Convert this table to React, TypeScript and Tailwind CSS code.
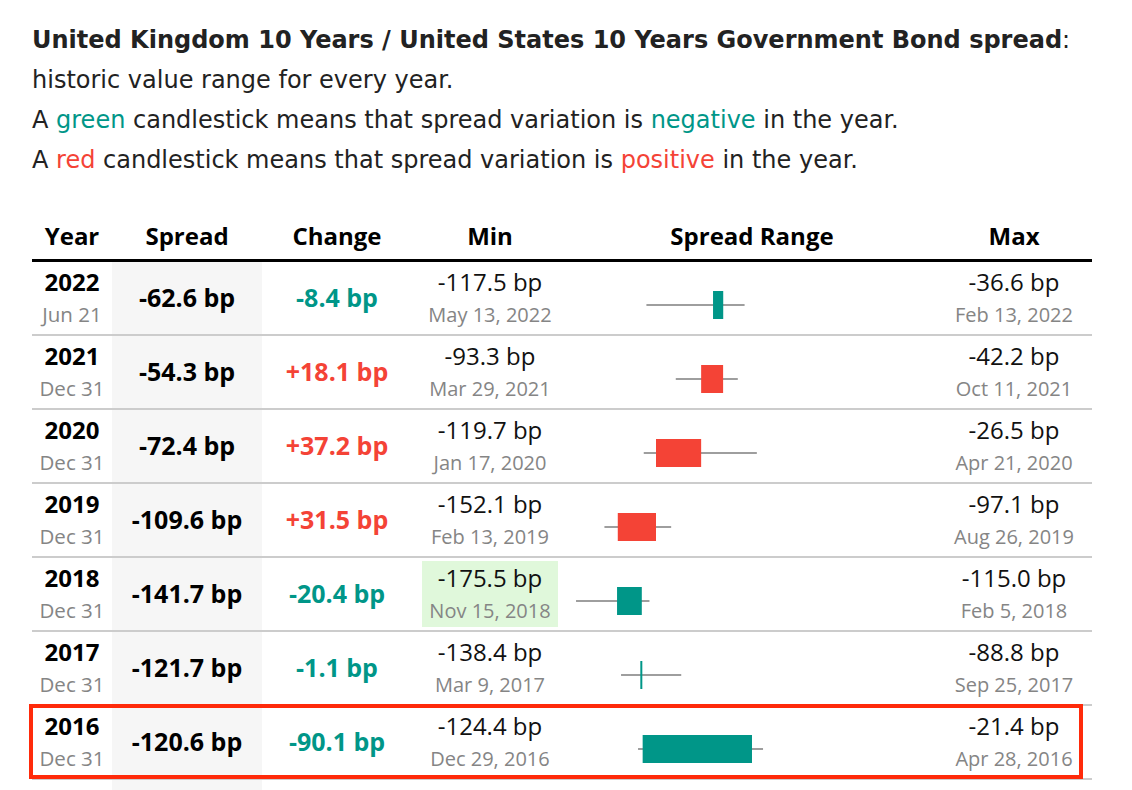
import React from "react";

type Row = {
  year: string;
  date: string;
  spread: number;
  change: number;
  min: number;
  minDate: string;
  max: number;
  maxDate: string;
  hlMin?: boolean;
};

const rows: Row[] = [
  { year: "2022", date: "Jun 21", spread: -62.6, change: -8.4, min: -117.5, minDate: "May 13, 2022", max: -36.6, maxDate: "Feb 13, 2022" },
  { year: "2021", date: "Dec 31", spread: -54.3, change: 18.1, min: -93.3, minDate: "Mar 29, 2021", max: -42.2, maxDate: "Oct 11, 2021" },
  { year: "2020", date: "Dec 31", spread: -72.4, change: 37.2, min: -119.7, minDate: "Jan 17, 2020", max: -26.5, maxDate: "Apr 21, 2020" },
  { year: "2019", date: "Dec 31", spread: -109.6, change: 31.5, min: -152.1, minDate: "Feb 13, 2019", max: -97.1, maxDate: "Aug 26, 2019" },
  { year: "2018", date: "Dec 31", spread: -141.7, change: -20.4, min: -175.5, minDate: "Nov 15, 2018", max: -115.0, maxDate: "Feb 5, 2018", hlMin: true },
  { year: "2017", date: "Dec 31", spread: -121.7, change: -1.1, min: -138.4, minDate: "Mar 9, 2017", max: -88.8, maxDate: "Sep 25, 2017" },
  { year: "2016", date: "Dec 31", spread: -120.6, change: -90.1, min: -124.4, minDate: "Dec 29, 2016", max: -21.4, maxDate: "Apr 28, 2016" },
];

const fmt = (v: number, sign = false) => {
  const s = Math.abs(v).toFixed(1);
  if (v < 0) return `-${s} bp`;
  return `${sign ? "+" : ""}${s} bp`;
};

const GREEN = "#009688";
const RED = "#f44336";

function Candle({ r }: { r: Row }) {
  const x = (v: number) => 221 + 1.2135 * v;
  const open = r.spread - r.change;
  const close = r.spread;
  const bx1 = x(Math.min(open, close));
  const bx2 = x(Math.max(open, close));
  const w = Math.max(2, bx2 - bx1);
  const color = r.change < 0 ? GREEN : RED;
  return (
    <svg width="368" height="72" className="block">
      <line x1={x(r.min)} x2={x(r.max)} y1="43" y2="43" stroke="#9e9e9e" strokeWidth="2" />
      <rect x={w === 2 ? bx1 - 1 : bx1} y="29" width={w} height="28" fill={color} />
    </svg>
  );
}

export default function App() {
  return (
    <div className="h-[790px] bg-white overflow-hidden">
      <div
        className="pl-[32px] pt-[20px] text-[24px] leading-[40px] text-[#222]"
        style={{ fontFamily: '"DejaVu Sans", Verdana, sans-serif' }}
      >
        <div>
          <span className="font-bold">United Kingdom 10 Years / United States 10 Years Government Bond spread</span>:
        </div>
        <div>historic value range for every year.</div>
        <div>
          A <span className="text-[#009688]">green</span> candlestick means that spread variation is{" "}
          <span className="text-[#009688]">negative</span> in the year.
        </div>
        <div>
          A <span className="text-[#f44336]">red</span> candlestick means that spread variation is{" "}
          <span className="text-[#f44336]">positive</span> in the year.
        </div>
      </div>

      <div className="relative ml-[32px] mt-[34px] w-[1060px]" style={{ fontFamily: '"Open Sans", sans-serif' }}>
        <table className="w-[1060px] table-fixed border-collapse text-black">
          <colgroup>
            <col className="w-[80px]" />
            <col className="w-[150px]" />
            <col className="w-[150px]" />
            <col className="w-[156px]" />
            <col className="w-[368px]" />
            <col className="w-[156px]" />
          </colgroup>
          <thead>
            <tr className="h-[46px] border-b-[3px] border-black text-[24px] font-bold">
              <th className="p-0 text-center">Year</th>
              <th className="p-0 text-center">Spread</th>
              <th className="p-0 text-center">Change</th>
              <th className="p-0 text-center">Min</th>
              <th className="p-0 text-center">Spread Range</th>
              <th className="p-0 text-center">Max</th>
            </tr>
          </thead>
          <tbody>
            {rows.map((r) => (
              <tr key={r.year} className="h-[74px] border-b-2 border-[#cccccc]">
                <td className="p-0 text-center align-middle">
                  <div className="text-[24px] font-bold leading-[33px]">{r.year}</div>
                  <div className="text-[20.5px] leading-[33px] text-[#858585]">{r.date}</div>
                </td>
                <td className="bg-[#f6f6f6] p-0 text-center align-middle text-[25px] font-bold">{fmt(r.spread)}</td>
                <td
                  className={`p-0 text-center align-middle text-[25px] font-bold ${
                    r.change < 0 ? "text-[#009688]" : "text-[#f44336]"
                  }`}
                >
                  {fmt(r.change, true)}
                </td>
                <td className="p-0 text-center align-middle">
                  <div className={`mx-auto inline-block px-[7px] ${r.hlMin ? "bg-[#e0f8db]" : ""}`}>
                    <div className="text-[24px] leading-[33px] text-[#111]">{fmt(r.min)}</div>
                    <div className="text-[20px] leading-[33px] text-[#858585]">{r.minDate}</div>
                  </div>
                </td>
                <td className="p-0 align-middle">
                  <Candle r={r} />
                </td>
                <td className="p-0 text-center align-middle">
                  <div className="text-[24px] leading-[33px] text-[#111]">{fmt(r.max)}</div>
                  <div className="text-[20px] leading-[33px] text-[#858585]">{r.maxDate}</div>
                </td>
              </tr>
            ))}
            <tr className="h-[74px]">
              <td className="p-0" />
              <td className="bg-[#f6f6f6] p-0" />
              <td className="p-0" />
              <td className="p-0" />
              <td className="p-0" />
              <td className="p-0" />
            </tr>
          </tbody>
        </table>
        <div className="pointer-events-none absolute left-[-3px] top-[490px] h-[75px] w-[1054px] border-[4px] border-[#ff2a0a]" />
      </div>
    </div>
  );
}
